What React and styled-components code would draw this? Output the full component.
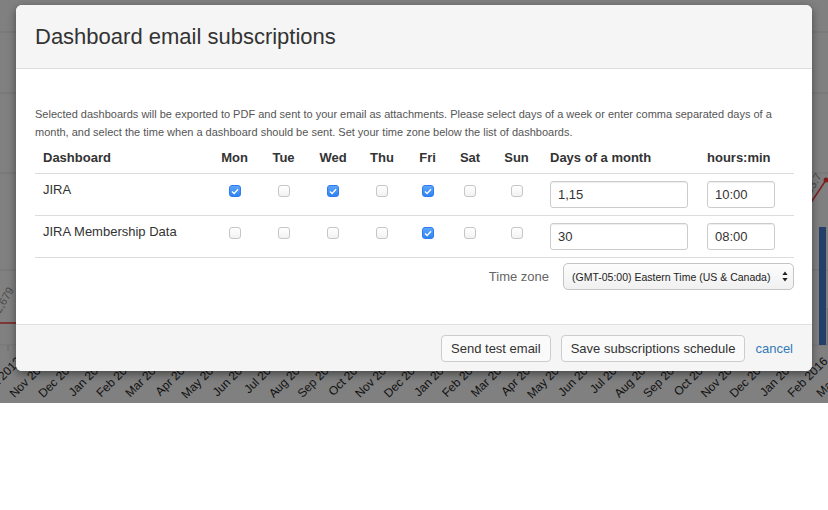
import React from "react";
import styled, { createGlobalStyle } from "styled-components";

const GlobalStyle = createGlobalStyle`
  body {
    margin: 0;
    background: #fff;
    font-family: "Liberation Sans", Arial, sans-serif;
  }
`;

const Page = styled.div`
  width: 828px;
  height: 510px;
  background: #fff;
`;

const Backdrop = styled.div`
  position: relative;
  height: 403px;
  background: #808080;
  overflow: hidden;
`;

const Chart = styled.svg`
  display: block;
`;

const Dialog = styled.div`
  position: absolute;
  left: 16px;
  top: 5px;
  width: 796px;
  background: #fff;
  border-radius: 6px;
  box-shadow: 0 3px 9px rgba(0, 0, 0, 0.45);
  overflow: hidden;
`;

const Header = styled.div`
  height: 63px;
  display: flex;
  align-items: center;
  padding: 0 19px;
  background: #f5f5f5;
  border-bottom: 1px solid #dedede;
`;

const Title = styled.h4`
  margin: 0;
  font-size: 22px;
  font-weight: 400;
  color: #333;
`;

const Body = styled.div`
  padding: 36px 18px 34px 19px;
`;

const Description = styled.p`
  margin: 0;
  font-size: 11px;
  line-height: 18px;
  color: #555;
`;

const Table = styled.table`
  width: 759px;
  border-collapse: collapse;
  table-layout: fixed;
`;

const Th = styled.th`
  box-sizing: border-box;
  width: ${(p) => p.$w}px;
  padding: 8px 8px 6px;
  font-size: 13px;
  font-weight: 700;
  line-height: 18px;
  color: #333;
  white-space: nowrap;
  text-align: ${(p) => (p.$center ? "center" : "left")};
  border-bottom: 1px solid #ddd;
`;

const Td = styled.td`
  box-sizing: border-box;
  padding: 7px 8px;
  font-size: 13px;
  line-height: 18px;
  color: #333;
  vertical-align: top;
  text-align: ${(p) => (p.$center ? "center" : "left")};
  border-bottom: 1px solid #ddd;
`;

const Box = styled.span`
  display: flex;
  align-items: center;
  justify-content: center;
  width: 12px;
  height: 12px;
  margin: 4px auto 0;
  box-sizing: border-box;
  border-radius: 3px;
  border: 1px solid ${(p) => (p.$checked ? "#2f7cef" : "#c6c6c6")};
  background: ${(p) =>
    p.$checked ? "linear-gradient(#5ea5fb, #2f82f4)" : "linear-gradient(#ffffff, #f2f2f2)"};
`;

const TextInput = styled.input`
  display: block;
  box-sizing: border-box;
  width: ${(p) => p.$w}px;
  height: 27px;
  margin: 0;
  padding: 0 7px;
  border: 1px solid #ccc;
  border-radius: 3px;
  box-shadow: inset 0 1px 1px rgba(0, 0, 0, 0.075);
  font-family: "Liberation Sans", Arial, sans-serif;
  font-size: 13px;
  color: #333;
  background: #fff;
`;

const ZoneRow = styled.div`
  display: flex;
  justify-content: flex-end;
  align-items: center;
  gap: 14px;
  margin-top: 5px;
`;

const ZoneLabel = styled.label`
  font-size: 13px;
  color: #666;
`;

const SelectWrap = styled.div`
  position: relative;
  width: 231px;
`;

const Select = styled.select`
  display: block;
  width: 100%;
  height: 27px;
  padding: 0 14px 0 8px;
  appearance: none;
  border: 1px solid #c4c4c4;
  border-radius: 5px;
  background: linear-gradient(#fdfdfd, #f0f0f0);
  font-family: "Liberation Sans", Arial, sans-serif;
  font-size: 10.5px;
  color: #222;
`;

const Arrows = styled.svg`
  position: absolute;
  right: 6px;
  top: 8px;
  pointer-events: none;
`;

const Footer = styled.div`
  display: flex;
  justify-content: flex-end;
  align-items: center;
  gap: 10px;
  padding: 10px 19px 9px;
  background: #f5f5f5;
  border-top: 1px solid #e0e0e0;
`;

const Button = styled.button`
  height: 27px;
  padding: 0 9px;
  border: 1px solid #ccc;
  border-radius: 4px;
  background: #fafafa;
  font-family: "Liberation Sans", Arial, sans-serif;
  font-size: 13px;
  color: #333;
`;

const Cancel = styled.a`
  font-size: 13px;
  color: #337ab7;
  text-decoration: none;
`;

const days = ["Mon", "Tue", "Wed", "Thu", "Fri", "Sat", "Sun"];
const dayWidths = [49, 49, 50, 48, 43, 42, 51];

const rows = [
  { name: "JIRA", checked: [true, false, true, false, true, false, false], month: "1,15", time: "10:00" },
  { name: "JIRA Membership Data", checked: [false, false, false, false, true, false, false], month: "30", time: "08:00" },
];

const monthNames = ["Jan", "Feb", "Mar", "Apr", "May", "Jun", "Jul", "Aug", "Sep", "Oct", "Nov", "Dec"];

const chartLabels = [];
for (let i = 0; i < 30; i++) {
  const m = (9 + i) % 12;
  const y = 2013 + Math.floor((9 + i) / 12);
  chartLabels.push(`${monthNames[m]} ${y}`);
}

const Checkbox = ({ checked }) => (
  <Box $checked={checked}>
    {checked && (
      <svg width="8" height="7" viewBox="0 0 8 7">
        <path d="M1 3.6 L3.1 5.6 L7 1.2" fill="none" stroke="#fff" strokeWidth="1.4" />
      </svg>
    )}
  </Box>
);

const BackgroundChart = () => (
  <Chart width="828" height="403">
    {[32, 93, 173, 270].map((y) => (
      <line key={y} x1="0" x2="828" y1={y} y2={y} stroke="#757575" strokeWidth="1" />
    ))}
    <line x1="0" x2="828" y1="345" y2="345" stroke="#777" />
    <line x1="8" x2="8" y1="345" y2="351" stroke="#6a6a6a" />
    <line x1="0" x2="16" y1="323" y2="323" stroke="#7d1f1f" strokeWidth="1.5" />
    <text x="14" y="290" fontSize="11" fill="#4a4a4a" transform="rotate(-60 14 290)" textAnchor="end">
      2,679
    </text>
    <rect x="819" y="227" width="7" height="118" fill="#24406a" />
    <rect x="827" y="308" width="3" height="37" fill="#707070" />
    <path d="M806 210 L826 180" stroke="#7d1f1f" strokeWidth="1.5" fill="none" />
    <circle cx="826" cy="180" r="2.5" fill="#7d1f1f" />
    <text x="822" y="176" fontSize="11" fill="#4a4a4a" transform="rotate(-60 822 176)" textAnchor="end">
      2,293.7
    </text>
    {chartLabels.map((label, i) => {
      const x = 22 + i * 28.8;
      const y = 362;
      return (
        <text
          key={label}
          x={x}
          y={y}
          fontSize="12"
          fill="#111"
          textAnchor="end"
          fontFamily="Liberation Sans, Arial, sans-serif"
          transform={`rotate(-45 ${x} ${y})`}
        >
          {label}
        </text>
      );
    })}
  </Chart>
);

const App = () => {
  return (
    <Page>
      <GlobalStyle />
      <Backdrop>
        <BackgroundChart />
        <Dialog>
          <Header>
            <Title>Dashboard email subscriptions</Title>
          </Header>
          <Body>
            <Description>
              Selected dashboards will be exported to PDF and sent to your email as attachments. Please select days of a
              week or enter comma separated days of a month, and select the time when a dashboard should be sent. Set
              your time zone below the list of dashboards.
            </Description>
            <Table>
              <thead>
                <tr>
                  <Th $w={175}>Dashboard</Th>
                  {days.map((d, i) => (
                    <Th key={d} $w={dayWidths[i]} $center>
                      {d}
                    </Th>
                  ))}
                  <Th $w={157}>Days of a month</Th>
                  <Th $w={95}>hours:min</Th>
                </tr>
              </thead>
              <tbody>
                {rows.map((row) => (
                  <tr key={row.name}>
                    <Td>{row.name}</Td>
                    {row.checked.map((c, i) => (
                      <Td key={days[i]} $center>
                        <Checkbox checked={c} />
                      </Td>
                    ))}
                    <Td>
                      <TextInput $w={138} defaultValue={row.month} />
                    </Td>
                    <Td>
                      <TextInput $w={68} defaultValue={row.time} />
                    </Td>
                  </tr>
                ))}
              </tbody>
            </Table>
            <ZoneRow>
              <ZoneLabel>Time zone</ZoneLabel>
              <SelectWrap>
                <Select defaultValue="est">
                  <option value="est">(GMT-05:00) Eastern Time (US &amp; Canada)</option>
                </Select>
                <Arrows width="6" height="11" viewBox="0 0 6 11">
                  <path d="M3 0.5 L5.6 4 L0.4 4 Z" fill="#222" />
                  <path d="M3 10.5 L5.6 7 L0.4 7 Z" fill="#222" />
                </Arrows>
              </SelectWrap>
            </ZoneRow>
          </Body>
          <Footer>
            <Button>Send test email</Button>
            <Button>Save subscriptions schedule</Button>
            <Cancel href="#">cancel</Cancel>
          </Footer>
        </Dialog>
      </Backdrop>
    </Page>
  );
};

export default App;
